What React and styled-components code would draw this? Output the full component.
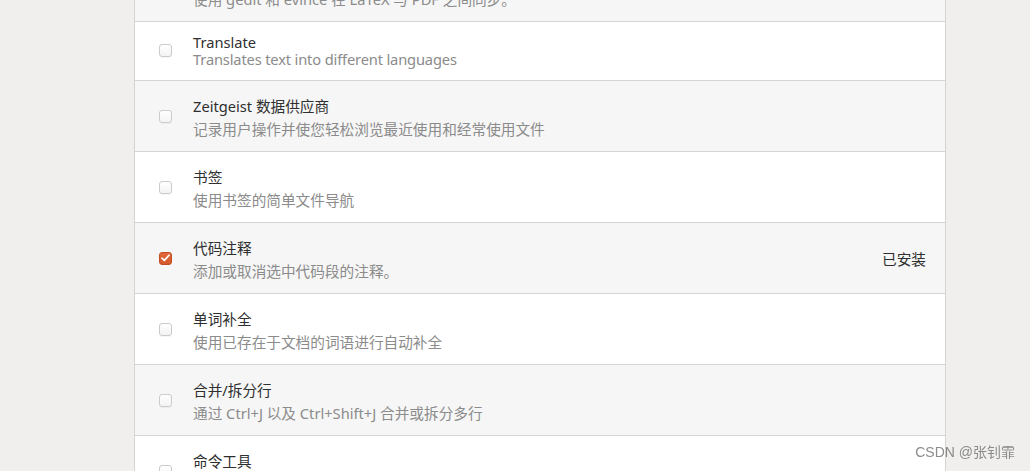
import React from "react";
import styled, { createGlobalStyle } from "styled-components";

const GlobalStyle = createGlobalStyle`
  html, body {
    margin: 0;
    padding: 0;
    background: #f0efee;
    overflow: hidden;
  }
  body {
    font-family: "Noto Sans", "Noto Sans CJK SC", sans-serif;
  }
`;

const Page = styled.div`
  display: flex;
  padding-left: 134px;
  height: 471px;
  overflow: hidden;
`;

const Panel = styled.div`
  width: 810px;
  margin-top: -49px;
  background: #ffffff;
  border-left: 1px solid #d6d4d1;
  border-right: 1px solid #d6d4d1;
  align-self: flex-start;
`;

const Row = styled.div`
  display: grid;
  grid-template-columns: 13px 1fr auto;
  column-gap: 21px;
  align-items: center;
  padding: ${(p) => (p.$latin ? "12px 19px 12px 24px" : "14px 19px 11px 24px")};
  background: ${(p) => (p.$alt ? "#f6f6f6" : "#ffffff")};
  border-bottom: 1px solid #d6d4d1;
`;

const Box = styled.span`
  width: 13px;
  height: 13px;
  box-sizing: border-box;
  border-radius: 3px;
  display: flex;
  align-items: center;
  justify-content: center;
  margin-top: ${(p) => (p.$latin ? "-1px" : "-3px")};
  border: 1px solid ${(p) => (p.$checked ? "#c24d22" : "#cdcbc8")};
  background: ${(p) =>
    p.$checked
      ? "linear-gradient(#e2683a, #d45a2c)"
      : "linear-gradient(#ffffff, #f3f3f3)"};
  box-shadow: ${(p) => (p.$checked ? "none" : "0 1px 0 rgba(0,0,0,0.04)")};
`;

const Texts = styled.div`
  display: flex;
  flex-direction: column;
  min-width: 0;
`;

const Title = styled.div`
  font-size: 14.67px;
  line-height: ${(p) => (p.$latin ? 17 : 23)}px;
  color: #2f2f2f;
  white-space: nowrap;
`;

const Desc = styled.div`
  font-size: 14.67px;
  line-height: ${(p) => (p.$latin ? 17 : 22)}px;
  color: #8b8b8b;
  white-space: nowrap;
  letter-spacing: ${(p) => (p.$latin ? "-0.15px" : "0")};
`;

const Status = styled.div`
  font-size: 14.67px;
  color: #2f2f2f;
  margin-top: -3px;
`;

const Watermark = styled.div`
  position: fixed;
  right: 15px;
  bottom: 10px;
  font-family: "Liberation Sans", "Noto Sans CJK SC", sans-serif;
  font-size: 14px;
  color: rgba(120, 120, 120, 0.85);
`;

const Check = () => (
  <svg width="9" height="8" viewBox="0 0 9 8">
    <path
      d="M1 4.2 L3.4 6.4 L8 1.2"
      fill="none"
      stroke="#ffffff"
      strokeWidth="1.7"
      strokeLinecap="round"
      strokeLinejoin="round"
    />
  </svg>
);

const plugins = [
  { title: "SyncTeX", desc: "使用 gedit 和 evince 在 LaTeX 与 PDF 之间同步。" },
  { title: "Translate", desc: "Translates text into different languages", latin: true },
  { title: "Zeitgeist 数据供应商", desc: "记录用户操作并使您轻松浏览最近使用和经常使用文件" },
  { title: "书签", desc: "使用书签的简单文件导航" },
  { title: "代码注释", desc: "添加或取消选中代码段的注释。", checked: true, status: "已安装" },
  { title: "单词补全", desc: "使用已存在于文档的词语进行自动补全" },
  { title: "合并/拆分行", desc: "通过 Ctrl+J 以及 Ctrl+Shift+J 合并或拆分多行" },
  { title: "命令工具", desc: "对当前文档执行外部命令" },
];

export default function App() {
  return (
    <>
      <GlobalStyle />
      <Page>
        <Panel>
          {plugins.map((p, i) => (
            <Row key={p.title} $alt={i % 2 === 0} $latin={p.latin}>
              <Box $checked={p.checked} $latin={p.latin}>
                {p.checked && <Check />}
              </Box>
              <Texts>
                <Title $latin={p.latin}>{p.title}</Title>
                <Desc $latin={p.latin}>{p.desc}</Desc>
              </Texts>
              <Status>{p.status || ""}</Status>
            </Row>
          ))}
        </Panel>
      </Page>
      <Watermark>CSDN @张钊霏</Watermark>
    </>
  );
}
